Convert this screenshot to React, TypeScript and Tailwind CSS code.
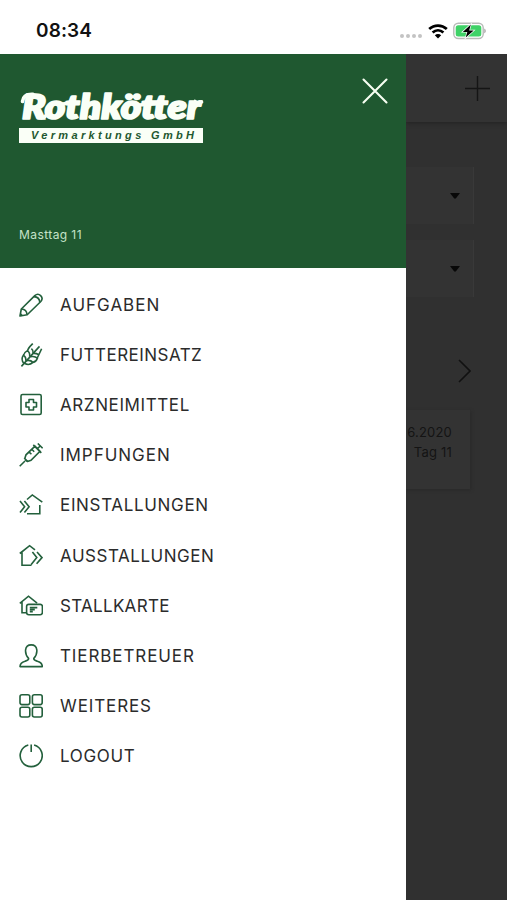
import React from 'react';

interface MenuItem {
  label: string;
  tracking: string;
  icon: React.ReactNode;
}

const menuItems: MenuItem[] = [
  {
    label: 'AUFGABEN',
    tracking: 'tracking-[1px]',
    icon: (
      <>
        <path d="M1 23 2.3 16 15.8 2.6c4-3.6 9.6 1.6 6 5.9L8.2 21.8 1 23Z" strokeLinejoin="round" />
        <path d="M15 3.6c3.3.2 5.6 2.5 5.8 5.7M2.5 16c3.2.2 5.3 2.4 5.5 5.6M1.4 20.8l2 2" />
      </>
    ),
  },
  {
    label: 'FUTTEREINSATZ',
    tracking: 'tracking-[0.46px]',
    icon: (
      <>
        <path d="M2.4 23.4 20.5 3.4" />
        <path d="M5 20.4c-2.4-2.6-2.5-5.5-.6-8.2 2 1.2 2.7 3.2 2.4 5.7M4.6 12.2C5 10.2 6.2 8.8 8.4 7.6c2 1.6 2.7 3.6 2.2 6.1M8.6 7.8c.3-2.6 2.6-4.6 5.2-7.2M12.4 5.6c1.4 1 1.9 2.5 1.7 4.6" />
        <path d="M5.4 20.2c3 1.9 6 1.5 8.6-.8-1.8-1.9-4-2.4-6.8-1.8M14 19.4c2-.4 3.6-1.8 4.4-4.2-1.9-1.7-4.2-2.1-6.9-1.4M18.2 15.2c1.2-2.9 2.8-5.5 4.4-9.4M19.5 11.7c-1.5-1.1-3.1-1.4-5-1.3" />
      </>
    ),
  },
  {
    label: 'ARZNEIMITTEL',
    tracking: 'tracking-[0.6px]',
    icon: (
      <>
        <rect x="2" y="1.5" width="20.2" height="20" rx="1.6" />
        <path d="M10 6.5h4.5v3h3V14h-3v3H10v-3H7V9.500h3v-3Z" strokeLinejoin="round" />
      </>
    ),
  },
  {
    label: 'IMPFUNGEN',
    tracking: 'tracking-[0.97px]',
    icon: (
      <>
        <path d="M.7 23.2 6 18M5.2 15l4 4M5.8 15.500 7 11.800 16 3.200l5 5-9 9-3.600 1.200M14.300 1.900l8 8M18.400 5.700l3-3M18.800.5l4.800 4.800M10.200 9l2.200 2.200M13 6.500l2.200 2.200" />
        <path d="m6 16.500 2 2" />
      </>
    ),
  },
  {
    label: 'EINSTALLUNGEN',
    tracking: 'tracking-[0.66px]',
    icon: (
      <path d="m8 6.500 5.300-4.600L23.300 9.100M20.800 12v8.800H8M1 8.100l4.600 5.700L1 19.500M5.400 8.100l4.700 5.700-4.700 5.700" />
    ),
  },
  {
    label: 'AUSSTALLUNGEN',
    tracking: 'tracking-[0.53px]',
    icon: (
      <path d="M.8 9.500 10.600 1.700 16 5.800M3 8.500v12.700h9.500M13.400 8l4.400 5.600-5.600 7M18 8l5 5.600-5.400 6.200" />
    ),
  },
  {
    label: 'STALLKARTE',
    tracking: 'tracking-[0.3px]',
    icon: (
      <>
        <path d="M.8 9.300 9.500 2.200l8.600 6.900M3 8v10.700h4" />
        <rect x="7.600" y="10.400" width="15.800" height="10.300" rx="2.200" />
        <path d="M10.800 13.600h7.500M10.800 15.600h5M10.800 17.600h3" />
      </>
    ),
  },
  {
    label: 'TIERBETREUER',
    tracking: 'tracking-[0.9px]',
    icon: (
      <path
        d="M9.600 14.300C7.200 12 6.300 9 6.600 5.800 7 2.500 9.300.9 12.200.9s5.200 1.600 5.600 4.900c.3 3.200-.6 6.200-3 8.500-.2 2.100 1 2.300 3.500 2.900 2.900.7 4.900 2.200 5 5.400H1c.1-3.200 2.200-4.700 5.100-5.400 2.500-.6 3.700-.8 3.500-2.900Z"
        strokeLinejoin="round"
      />
    ),
  },
  {
    label: 'WEITERES',
    tracking: 'tracking-[0.88px]',
    icon: (
      <>
        <rect x="1" y=".8" width="9.800" height="9.800" rx="2" />
        <rect x="13.400" y=".8" width="9.800" height="9.800" rx="2" />
        <rect x="1" y="13.200" width="9.800" height="9.800" rx="2" />
        <rect x="13.400" y="13.200" width="9.800" height="9.800" rx="2" />
      </>
    ),
  },
  {
    label: 'LOGOUT',
    tracking: 'tracking-[0.66px]',
    icon: <path d="M9.300 1a11 11 0 1 0 5.800 0M12.200.5V8" />,
  },
];

const StatusBar: React.FC = () => (
  <div className="flex h-[54px] shrink-0 items-center justify-between bg-white pl-9 pr-[20px] pt-[8px]">
    <span className="font-['Inter'] text-[19px] font-semibold leading-6 tracking-[0.1px] text-[#111]">08:34</span>
    <div className="flex items-center">
      <div className="mt-[9px] flex gap-[2px]">
        {[0, 1, 2, 3].map((dot) => (
          <span key={dot} className="h-1 w-1 rounded-full bg-[#c3c3c3]" />
        ))}
      </div>
      <svg className="ml-[6px]" width="20" height="15" viewBox="0 0 20 15" fill="none" stroke="#000" strokeWidth="2.7">
        <path d="M1.2 5.1c5-4.700 12.600-4.700 17.600 0M4.600 8.600c3.200-2.900 7.600-2.900 10.800 0" />
        <path d="M6.800 11.300c1.900-1.600 4.500-1.600 6.400 0L10 14.500Z" fill="#000" stroke="none" />
      </svg>
      <svg className="ml-[5px]" width="34" height="18" viewBox="0 0 34 18">
        <rect x=".8" y="1.300" width="29.400" height="15.200" rx="4.500" fill="#fff" stroke="#b8bab8" strokeWidth="1.4" />
        <rect x="2.700" y="3.200" width="25.600" height="11.400" rx="2.500" fill="#3fd267" />
        <path d="M31.200 6.500c2.200.8 2.200 4 0 4.800Z" fill="#b0b0b0" />
        <path d="m17.800 2.600-8 7.300h4.500l-1.600 5.700 8-7.200h-4.500Z" fill="#000" stroke="#fff" strokeWidth="1.400" paintOrder="stroke" />
      </svg>
    </div>
  </div>
);

const Logo: React.FC = () => (
  <svg className="block overflow-visible" width="186" height="56" viewBox="0 0 186 56">
    <text
      x="3"
      y="30.5"
      textLength="179"
      lengthAdjust="spacingAndGlyphs"
      fill="#fafff7"
      stroke="#fafff7"
      strokeWidth="1.6"
      strokeLinejoin="round"
      className="font-['Lato'] text-[33px] font-extrabold italic"
    >
      Rothkötter
    </text>
    {/* swash of the R and the strokes that join the letters */}
    <g fill="none" stroke="#fafff7" strokeWidth="3.6" strokeLinecap="round">
      <path d="M3.500 13.500C4 8.500 8 6 14 6.300M19 28.500c2 2 5 2 7.500-.5M42 16.500l9-2M71 29c2 1.800 4 1.200 6-1M120 17l22-1.500M176 13.500c2.500 1.500 4.500 1.500 6.500.5" />
    </g>
    <rect y="40" width="184" height="15" fill="#fafff7" />
    <text
      x="12"
      y="51.2"
      textLength="163"
      fill="#1f5830"
      className="font-['Liberation_Sans'] text-[11px] font-bold italic"
    >
      Vermarktungs GmbH
    </text>
  </svg>
);

const Caret: React.FC = () => (
  <svg width="10" height="6" viewBox="0 0 10 6">
    <path d="M0 0h10L5.800 5.500H4.200Z" fill="#080808" />
  </svg>
);

const Drawer: React.FC = () => (
  <aside className="flex w-[406px] shrink-0 flex-col bg-white">
    <header className="flex h-[214px] shrink-0 flex-col justify-between bg-[#1f5830] pb-[25px] pl-[19px] pr-[18px] pt-[24px]">
      <div className="flex items-start justify-between">
        <div className="pt-[10px]">
          <Logo />
        </div>
        <button aria-label="Menü schließen">
          <svg width="26" height="26" viewBox="0 0 26 26" stroke="#f7fff2" strokeWidth="2.1" strokeLinecap="round">
            <path d="m1.500 1.500 23 23M24.500 1.500l-23 23" />
          </svg>
        </button>
      </div>
      <span className="font-['Inter'] text-[12px] leading-4 tracking-[0.42px] text-[#c5e2c8]">Masttag 11</span>
    </header>
    <nav className="pt-[12px]">
      {menuItems.map((item) => (
        <a key={item.label} className="flex h-[50.1px] items-center pl-[19px]">
          <svg
            className="mr-[17px] shrink-0"
            width="24"
            height="24"
            viewBox="0 0 24 24"
            fill="none"
            stroke="#23603c"
            strokeWidth="1.6"
          >
            {item.icon}
          </svg>
          <span className={`whitespace-nowrap font-['Inter'] text-[17px] leading-6 text-[#2b2b2b] ${item.tracking}`}>
            {item.label}
          </span>
        </a>
      ))}
    </nav>
  </aside>
);

// Part of the page that stays visible behind the drawer
const DimmedPage: React.FC = () => (
  <main className="flex min-w-0 flex-1 flex-col overflow-hidden bg-[#303030]">
    <div className="flex h-[68px] shrink-0 justify-end bg-[#333] pr-[17px] pt-[22px] shadow-[0_1px_4px_#222]">
      <svg width="25" height="25" viewBox="0 0 25 25" stroke="#151515" strokeWidth="1.4">
        <path d="M12.500 0v25M0 12.500h25" />
      </svg>
    </div>
    <div className="mt-[45px] flex h-[57px] w-[68px] shrink-0 items-center justify-end border-r border-[#393939] bg-[#333] pr-[13px]">
      <Caret />
    </div>
    <div className="mt-[16px] flex h-[57px] w-[68px] shrink-0 items-center justify-end border-r border-[#393939] bg-[#333] pr-[13px]">
      <Caret />
    </div>
    <div className="mt-[62px] flex shrink-0 justify-end pr-[36px]">
      <svg width="13" height="24" viewBox="0 0 13 24" fill="none" stroke="#111" strokeWidth="1.6">
        <path d="m1 1 11 11L1 23" />
      </svg>
    </div>
    <div className="mt-[27px] flex h-[79px] w-[64px] shrink-0 flex-col items-end bg-[#333] pr-[18px] pt-[12px] font-['Inter'] text-[13px] leading-[20px] text-[#141414] shadow-[1px_1px_3px_#292929]">
      <span className="whitespace-nowrap tracking-[0.2px]">6.2020</span>
      <span className="whitespace-nowrap tracking-[0.2px]">Tag 11</span>
    </div>
  </main>
);

const App: React.FC = () => (
  <div className="flex h-[900px] w-[507px] flex-col overflow-hidden bg-white">
    <StatusBar />
    <div className="flex min-h-0 flex-1">
      <Drawer />
      <DimmedPage />
    </div>
  </div>
);

export default App;
